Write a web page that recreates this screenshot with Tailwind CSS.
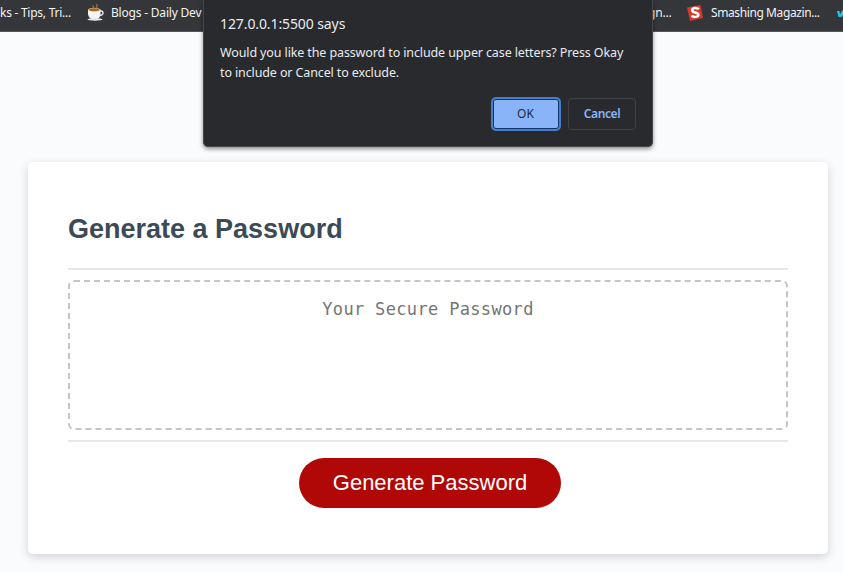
<!DOCTYPE html>
<html lang="en">
<head>
<meta charset="utf-8">
<title>Password Generator</title>
<script src="https://cdn.jsdelivr.net/npm/@tailwindcss/browser@4"></script>
</head>
<body class="h-[572px] w-[843px] overflow-hidden bg-[#fafbfd] font-['Liberation_Sans',Arial,sans-serif]">
<div class="relative h-[572px] overflow-hidden">
  <nav class="flex h-8 items-start justify-between overflow-hidden border-b border-[#56575a] bg-[#35363a] pt-[5px] font-['Noto_Sans',sans-serif] text-[12px] leading-4 whitespace-nowrap text-[#f1f3f4]">
    <div class="flex">
      <span class="w-[87px] tracking-[-0.26px]">ks - Tips, Tri...</span>
      <svg class="-mt-px mr-[7px] h-[17px] w-[17px]" viewBox="0 0 17 17">
        <path d="M6 4Q7 3 5.500 1.500M9 4Q11 2.500 9.500 0" fill="none" stroke="#9b765b" stroke-width="1.200"/>
        <path d="M12.500 7h1.500q2 0 2 2t-3 2.500" fill="none" stroke="#eee" stroke-width="1.300"/>
        <path d="M1 5.500h12.500v4q0 4-3 5.500h-6Q1 13 1 9.500Z" fill="#f5f5f5"/>
        <ellipse cx="7.200" cy="5.700" rx="6.200" ry="2" fill="#d5a66b"/>
        <ellipse cx="7.200" cy="5.700" rx="4.800" ry="1.200" fill="#9b632c"/>
        <ellipse cx="8" cy="15.400" rx="7.500" ry="1.300" fill="#e6e6e6"/>
      </svg>
      <span class="tracking-[-0.2px]">Blogs - Daily Dev</span>
    </div>
    <div class="flex w-[195px] shrink-0">
      <span class="w-[39px] shrink-0 tracking-[-0.2px]">gn...</span>
      <svg class="mr-2 h-4 w-4 shrink-0" viewBox="0 0 16 16">
        <path d="M0 2.500 13.500 0 16 13 3 16Z" fill="#d33a2c"/>
        <path d="M11.800 4.300C10 2.200 4.800 2.700 5.200 5.500c.3 2.400 6 1.600 6.200 4.200.2 2.500-4.700 3-6.900.9" fill="none" stroke="#fff" stroke-width="2.500"/>
      </svg>
      <span class="w-[126px] shrink-0 tracking-[-0.4px]">Smashing Magazin...</span>
      <svg class="mt-[5px] h-2 w-3 shrink-0" viewBox="0 0 12 8"><path d="M0 1h2.500L3 4.500 5 .5h2v4l2-4h3L8 7H5.500V5L4 7H1.500Z" fill="#23c4ee"/></svg>
    </div>
  </nav>

  <main class="mt-[130px] mr-[15px] ml-[28px] h-[392px] rounded-[5px] bg-white px-10 pt-[50px] shadow-[0_3px_10px_rgba(60,65,70,0.22)]">
    <h2 class="h-14 text-[27px] leading-[34px] font-bold whitespace-nowrap text-[#3c4a56]">Generate a Password</h2>
    <section class="h-[174px] border-y-2 border-[#e6e7e8] py-[10px]">
      <div class="h-[150px] rounded-md border-2 border-dashed border-[#c2c5c9] pt-[15px] text-center font-['DejaVu_Sans_Mono',monospace] text-[17px] leading-[24px] tracking-[0.34px] text-[#757575]">Your Secure Password</div>
    </section>
    <div class="flex justify-center pt-4 pl-1">
      <button class="h-[50px] w-[262px] rounded-full bg-[#b00707] text-[22px] leading-[26px] text-white">Generate Password</button>
    </div>
  </main>

  <div role="dialog" class="absolute top-0 left-[203px] flex h-[147px] w-[450px] flex-col rounded-b-[5px] border border-t-0 border-[#46474b] bg-[#292a2d] px-4 pt-[14px] font-['Noto_Sans',sans-serif] text-[#e8eaed] shadow-[0_2px_4px_rgba(0,0,0,0.45)]">
    <h1 class="h-[29px] text-[14px] leading-5 tracking-[-0.1px] whitespace-nowrap">127.0.0.1:5500 says</h1>
    <p class="text-[12.500px] leading-5 tracking-[-0.12px] whitespace-nowrap">Would you like the password to include upper case letters? Press Okay<br>to include or Cancel to exclude.</p>
    <div class="mt-[15px] flex items-center justify-end gap-[9px] text-[12px]">
      <button class="h-[30px] w-[66px] rounded-[3px] border border-[#10376b] bg-[#8ab4f8] pr-px text-[#202a3a] ring-2 ring-[#4b7cc7]">OK</button>
      <button class="h-8 w-[68px] rounded-[4px] border border-[#414246] font-semibold tracking-[-0.4px] text-[#8ab4f8]">Cancel</button>
    </div>
  </div>
</div>
</body>
</html>
